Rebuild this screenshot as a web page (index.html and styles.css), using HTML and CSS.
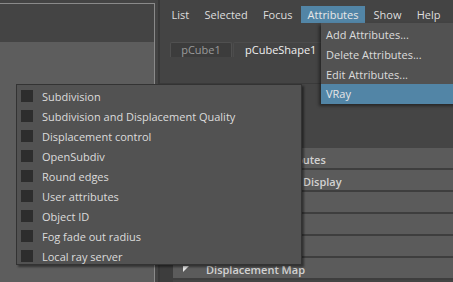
FILE: index.html
```html
<!DOCTYPE html>
<html>
<head>
<meta charset="utf-8">
<link rel="stylesheet" href="styles.css">
</head>
<body>
<div class="app">
  <div class="left">
    <div class="left-top"></div>
    <div class="left-body"></div>
  </div>
  <div class="gap"></div>
  <div class="right">
    <div class="menubar">
      <span class="mi">List</span>
      <span class="mi">Selected</span>
      <span class="mi">Focus</span>
      <span class="mi active">Attributes</span>
      <span class="mi">Show</span>
      <span class="mi">Help</span>
    </div>
    <div class="tabs">
      <div class="tab">pCube1</div>
      <div class="tab current">pCubeShape1</div>
    </div>
    <div class="tabspace"></div>
    <div class="ae">
      <div class="ae-gutter"></div>
      <div class="ae-body">
        <div class="ae-top"></div>
        <div class="frame"><span class="tri"></span><span class="ft">Tessellation Attributes</span></div>
        <div class="frame"><span class="tri"></span><span class="ft">Mesh Component Display</span></div>
        <div class="frame"><span class="tri"></span><span class="ft">Mesh Controls</span></div>
        <div class="frame"><span class="tri"></span><span class="ft">Tangent Space</span></div>
        <div class="frame"><span class="tri"></span><span class="ft">Smooth Mesh</span></div>
        <div class="frame"><span class="tri"><svg width="6" height="7" viewBox="0 0 6 7"><polygon points="0,0 6,0 0,6" fill="#e8e8e8"/></svg></span><span class="ft">Displacement Map</span></div>
      </div>
    </div>
  </div>
</div>

<div class="dropdown">
  <div class="di">Add Attributes...</div>
  <div class="di">Delete Attributes...</div>
  <div class="di">Edit Attributes...</div>
  <div class="di hl">VRay</div>
</div>

<div class="popup">
  <div class="pi"><span class="cb"></span><span class="pt">Subdivision</span></div>
  <div class="pi"><span class="cb"></span><span class="pt">Subdivision and Displacement Quality</span></div>
  <div class="pi"><span class="cb"></span><span class="pt">Displacement control</span></div>
  <div class="pi"><span class="cb"></span><span class="pt">OpenSubdiv</span></div>
  <div class="pi"><span class="cb"></span><span class="pt">Round edges</span></div>
  <div class="pi"><span class="cb"></span><span class="pt">User attributes</span></div>
  <div class="pi"><span class="cb"></span><span class="pt">Object ID</span></div>
  <div class="pi"><span class="cb"></span><span class="pt">Fog fade out radius</span></div>
  <div class="pi"><span class="cb"></span><span class="pt">Local ray server</span></div>
</div>
</body>
</html>
```

FILE: styles.css
```css
* { box-sizing: border-box; }
html, body {
  margin: 0;
  padding: 0;
  width: 453px;
  height: 282px;
  overflow: hidden;
  background: #444444;
  font-family: "Open Sans", "DejaVu Sans", sans-serif;
  font-size: 11px;
  color: #dcdcdc;
}
.app {
  display: flex;
  height: 282px;
}
.left {
  width: 155px;
  flex: none;
  margin-top: 3px;
  border-top: 1px solid #8a8a8a;
  border-right: 1px solid #8a8a8a;
  display: flex;
  flex-direction: column;
}
.left-top { height: 38px; background: #444444; }
.left-body { flex: 1; background: #5d5d5d; }
.gap { width: 3px; flex: none; }
.right {
  flex: 1;
  border-left: 2px solid #383838;
  display: flex;
  flex-direction: column;
  min-width: 0;
}
.menubar {
  display: flex;
  padding: 6px 0 0 4px;
  height: 23px;
  white-space: nowrap;
}
.mi {
  line-height: 17px;
  height: 17px;
  padding: 0 7.6px;
  color: #dedede;
}
.mi.active { background: #5285a6; color: #e8e8e8; padding: 0 6.5px; margin: 0 1px; }
.tabs {
  display: flex;
  margin-top: 19px;
  padding-left: 10px;
  height: 15px;
  white-space: nowrap;
}
.tab {
  width: 62px;
  height: 15px;
  line-height: 14px;
  text-align: center;
  background: #3c3c3c;
  border: 1px solid #505050;
  border-bottom: none;
  color: #9a9a9a;
  border-radius: 2px 2px 0 0;
}
.tab.current {
  width: auto;
  padding: 0 11px;
  margin-left: 1px;
  background: #444444;
  border-color: #4c4c4c;
  color: #f0f0f0;
}
.tabspace {
  height: 27px;
  border-bottom: 1px solid #3a3a3a;
}
.ae {
  flex: 1;
  display: flex;
}
.ae-gutter {
  width: 13px;
  flex: none;
  background: #3d3d3d;
}
.ae-body { flex: 1; display: flex; flex-direction: column; }
.ae-top { height: 64px; flex: none; background: #454545; }
.frame {
  height: 22px;
  flex: none;
  background: #5b5b5b;
  border-bottom: 2px solid #3e3e3e;
  display: flex;
  align-items: center;
  padding: 2px 0 0 10px;
  white-space: nowrap;
  color: #d2d2d2;
  font-weight: 600;
}
.tri { width: 23px; height: 7px; flex: none; display: flex; }

.dropdown {
  position: absolute;
  left: 321px;
  top: 23px;
  width: 140px;
  padding-top: 1px;
  background: #525252;
  box-shadow: -2px 2px 3px rgba(0,0,0,0.45);
}
.di {
  height: 20px;
  line-height: 22px;
  padding-left: 5px;
  color: #dcdcdc;
}
.di.hl { background: #5285a6; height: 20px; line-height: 20px; color: #e6e6e6; }

.popup {
  position: absolute;
  left: 16px;
  top: 84px;
  width: 286px;
  height: 181px;
  overflow: hidden;
  padding: 1px 0 0 0;
  background: #525252;
  border: 1px solid #333333;
  box-shadow: 2px 2px 2px rgba(0,0,0,0.45);
}
.pi {
  height: 20px;
  display: flex;
  align-items: center;
}
.cb {
  width: 12px;
  height: 12px;
  margin-left: 4px;
  background: #2d2d2d;
  flex: none;
}
.pt {
  margin-left: 9px;
  color: #dcdcdc;
  white-space: nowrap;
}
```
